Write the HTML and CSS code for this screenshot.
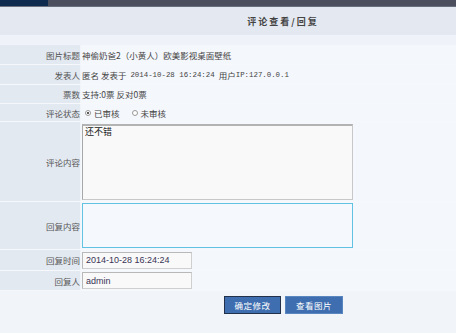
FILE: index.html
```html
<!DOCTYPE html>
<html>
<head>
<meta charset="utf-8">
<link rel="stylesheet" href="styles.css">
</head>
<body>
<div class="topbar"><div class="topbar-left"></div></div>
<div class="header"><span class="title">评论查看/回复</span></div>
<div class="spacer"></div>
<div class="form">
  <div class="row r20"><div class="lbl">图片标题</div><div class="val">神偷奶爸2（小黄人）欧美影视桌面壁纸</div></div>
  <div class="row r20"><div class="lbl">发表人</div><div class="val">匿名&nbsp;发表于<span class="mono sp">2014-10-28 16:24:24</span>用户<span class="mono">IP:127.0.0.1</span></div></div>
  <div class="row r19"><div class="lbl">票数</div><div class="val">支持:0票&nbsp;反对0票</div></div>
  <div class="row r18"><div class="lbl">评论状态</div><div class="val">
    <label class="radio"><span class="dot on"></span>已审核</label>
    <label class="radio"><span class="dot"></span>未审核</label>
  </div></div>
  <div class="row rta"><div class="lbl">评论内容</div><div class="val"><div class="ta ta1">还不错</div></div></div>
  <div class="row rta2"><div class="lbl">回复内容</div><div class="val"><div class="ta ta2"></div></div></div>
  <div class="row r21"><div class="lbl">回复时间</div><div class="val"><div class="inp">2014-10-28 16:24:24</div></div></div>
  <div class="row r20"><div class="lbl">回复人</div><div class="val"><div class="inp">admin</div></div></div>
</div>
<div class="actions">
  <button class="btn btn-primary">确定修改</button>
  <button class="btn">查看图片</button>
</div>
</body>
</html>
```
FILE: styles.css
```css
html, body {
  margin: 0;
  padding: 0;
}
body {
  width: 456px;
  height: 333px;
  overflow: hidden;
  background: #f1f4f9;
  font-family: "Noto Sans CJK SC", "Noto Sans", sans-serif;
  font-size: 8.5px;
  color: #333;
}
.topbar {
  height: 6px;
  background: #4b4f5d;
  border-bottom: 1px solid #6b7080;
  display: flex;
}
.topbar-left {
  width: 48px;
  background: #0e2a4f;
}
.header {
  height: 28px;
  background: #e4e9f1;
  display: flex;
  align-items: center;
  justify-content: center;
  padding-left: 110px;
}
.title {
  font-weight: bold;
  font-size: 9px;
  letter-spacing: 2px;
  color: #444;
}
.spacer {
  height: 10px;
  background: #eff3f9;
}
.form {
  display: flex;
  flex-direction: column;
}
.row {
  display: grid;
  grid-template-columns: 80px 1fr;
  column-gap: 1px;
  border-bottom: 1px solid #f6f8fb;
}
.r20 { height: 19px; }
.r19 { height: 18px; }
.r18 { height: 17px; }
.r21 { height: 20px; }
.rta { height: 79px; }
.rta2 { height: 47px; }
.lbl {
  background: #e3e9f1;
  display: flex;
  align-items: center;
  justify-content: flex-end;
  color: #555;
}
.val {
  background: #f4f7fc;
  display: flex;
  align-items: center;
  padding-left: 1px;
  white-space: nowrap;
  color: #444;
}
.mono {
  font-family: "Liberation Mono", "DejaVu Sans Mono", monospace;
  font-size: 7.4px;
}
.mono.sp {
  margin: 0 4px;
}
.radio {
  display: inline-flex;
  align-items: center;
  margin-left: 3px;
  margin-right: 9px;
}
.dot {
  width: 6px;
  height: 6px;
  border: 1px solid #999;
  border-radius: 50%;
  background: #fff;
  margin-right: 3px;
  position: relative;
  box-sizing: border-box;
}
.dot.on::after {
  content: "";
  position: absolute;
  left: 1px;
  top: 1px;
  width: 2px;
  height: 2px;
  border-radius: 50%;
  background: #222;
}
.ta {
  width: 271px;
  box-sizing: border-box;
  align-self: center;
}
.ta1 {
  height: 76px;
  background: #f9f9f9;
  border: 1px solid #c8c8c8;
  border-top: 2px solid #b3b3b3;
  border-left: 1px solid #a8a8a8;
  padding: 0 2px;
  font-size: 9px;
  color: #222;
  line-height: 11px;
}
.ta2 {
  height: 45px;
  border: 1px solid #62c2e2;
  background: #f5f8fc;
}
.inp {
  width: 110px;
  height: 17px;
  box-sizing: border-box;
  background: #f9f9f9;
  border: 1px solid #cfcfcf;
  border-top-color: #b8b8b8;
  border-left-color: #b8b8b8;
  font-family: "Liberation Sans", Arial, sans-serif;
  font-size: 9px;
  color: #3a3355;
  display: flex;
  align-items: center;
  padding-left: 3px;
}
.actions {
  display: flex;
  justify-content: flex-start;
  gap: 4px;
  padding-left: 224px;
  padding-top: 5px;
}
.btn {
  width: 58px;
  height: 18px;
  box-sizing: border-box;
  background: #3e6eaf;
  border: 1px solid #5a86c0;
  color: #fff;
  font-family: "Noto Sans CJK SC", sans-serif;
  font-size: 8.5px;
  letter-spacing: 0.5px;
  padding: 0;
  margin: 0;
  display: flex;
  align-items: center;
  justify-content: center;
}
.btn-primary {
  border: 1px solid #22304a;
  width: 57px;
}
```
